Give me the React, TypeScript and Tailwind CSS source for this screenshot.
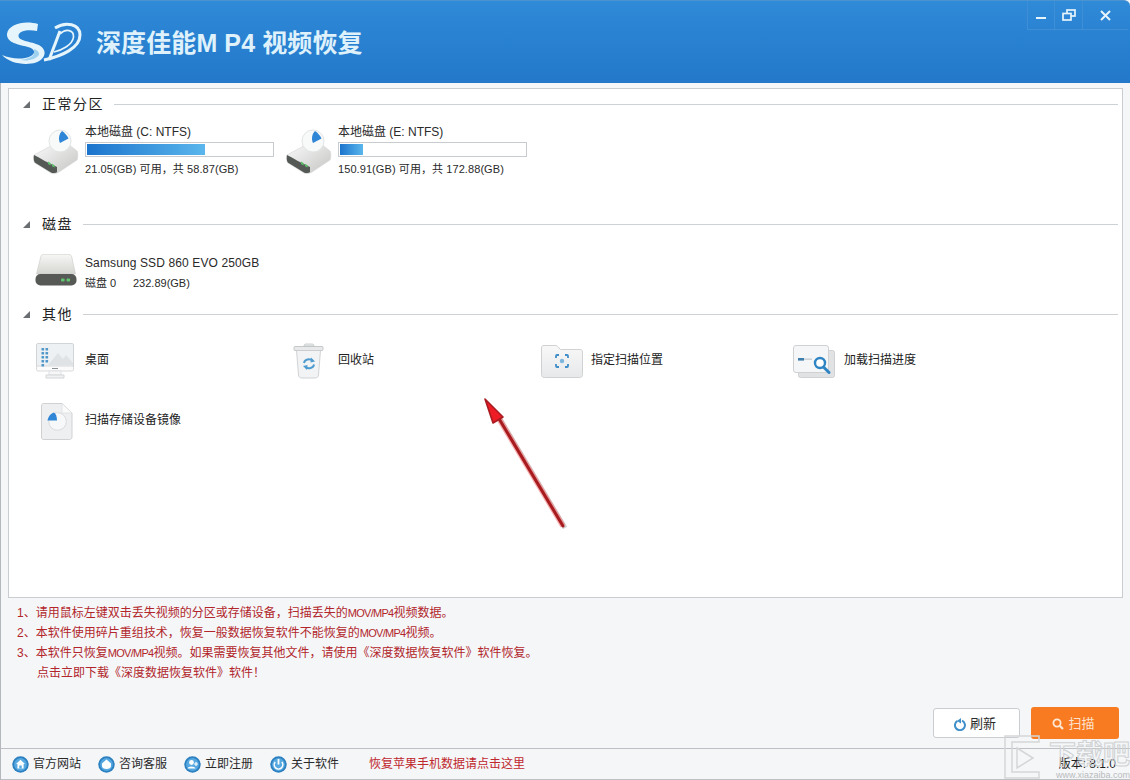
import React from "react";

const FONT = { fontFamily: '"Liberation Sans","Noto Sans CJK SC",sans-serif' };

function Logo() {
  return (
    <svg width="82" height="48" viewBox="0 0 82 48" fill="none">
      <path d="M38 5 C25 1 8 5 7 15 C6.5 24 19 25.5 28 28 C35 30 36 34 31 37 C23 41 11 40 2 36 C9 44 25 47 36 43.5 C47 39.5 47.5 29.5 37.5 25.5 C29 22 18 22 18.5 16.5 C19 11.5 29 10 37 12Z" fill="#e6f5fc" />
      <path d="M34 33 C35 37 28 40.5 20 41 C27 42.5 37 40.5 39 35.5 C39.5 33 37 31 34 30Z" fill="#9fd2ef" />
      <path d="M49 41 L60 12" stroke="#e6f5fc" strokeWidth="3" />
      <path d="M55 9 C66 2 80 5 80 16 C80 29 62 37 44 41" stroke="#e6f5fc" strokeWidth="3" />
      <path d="M60 15 C66 9 74 11 73.5 18 C72.5 26 62 31 54 33" stroke="#e6f5fc" strokeWidth="1.7" />
    </svg>
  );
}

function Triangle() {
  return (
    <svg width="7" height="7" viewBox="0 0 7 7"><path d="M7 0 V7 H0 Z" fill="#6a6e72" /></svg>
  );
}

function SectionHeader({ title }: { title: string }) {
  return (
    <div className="flex h-[30px] items-center pl-[14px] pr-[4px]">
      <Triangle />
      <span className="ml-[12px] text-[14px] tracking-[1.5px] text-[#222]">{title}</span>
      <div className="ml-[10px] h-px flex-1 bg-[#cfd2d5]" />
    </div>
  );
}

function PartitionIcon() {
  return (
    <svg width="48" height="48" viewBox="0 0 48 48">
      <defs>
        <linearGradient id="pb" x1="0" y1="0" x2="1" y2="1"><stop offset="0" stopColor="#fcfcfc" /><stop offset="1" stopColor="#c4c6c3" /></linearGradient>
      </defs>
      <path d="M2 28 L26 15 C29 14 32 14 35 16 L45 24 C46 25 46 31 45 33 L27 45 C24 47 21 47 19 46 L3 36 C1.5 35 1.5 30 2 28Z" fill="url(#pb)" stroke="#d3d5d3" strokeWidth=".6" />
      <path d="M2 28 C8 31 16 36 25 40 V45 C24 46 21 46.5 19 45.5 L3.5 36 C1.5 35 1.5 30 2 28Z" fill="#555956" />
      <path d="M16 34.5 L18.6 36 V38.4 L16 37Z M20 36.8 L22.6 38.2 V40.6 L20 39.2Z" fill="#5cc06a" />
      <circle cx="28" cy="14" r="11" fill="#f8f9f9" stroke="#e2e4e5" />
      <path d="M30 4 C33 6 35 8.5 36.5 11.5 L28 16 C26 12 27 7 30 4Z" fill="#2f86d6" />
    </svg>
  );
}

function DiskIcon() {
  return (
    <svg width="42" height="32" viewBox="0 0 42 32">
      <defs>
        <linearGradient id="db" x1="0" y1="0" x2="0" y2="1"><stop offset="0" stopColor="#f7f7f5" /><stop offset="1" stopColor="#d5d6d2" /></linearGradient>
      </defs>
      <path d="M6 2 C6.5 .8 8 .3 9 .3 H33 C34.5 .3 36 1 36.5 2 L40.5 20 H1.5Z" fill="url(#db)" stroke="#c9cac6" strokeWidth=".6" />
      <rect x=".5" y="20" width="41" height="11.5" rx="5" fill="#565956" />
      <rect x="26" y="24.5" width="3.6" height="3" rx="1" fill="#62c46e" />
      <rect x="31.5" y="24.5" width="3.6" height="3" rx="1" fill="#62c46e" />
    </svg>
  );
}

function DesktopIcon() {
  return (
    <svg width="40" height="36" viewBox="0 0 40 36">
      <rect x=".5" y=".5" width="37" height="26.5" rx="1.5" fill="#eef1f3" stroke="#d2d5d7" />
      <rect x=".5" y="23" width="37" height="5" rx="1.5" fill="#fbfbfb" stroke="#d8dadc" />
      <path d="M12 22 L22 10 L27 16 L30 12 L37 20 V22Z" fill="#e0e3e6" />
      {[0, 1, 2, 3, 4].map((r) =>
        (r === 4 ? [0] : [0, 1]).map((c) => (
          <rect key={`${r}${c}`} x={5.5 + c * 4} y={5 + r * 4} width="2.6" height="2.6" rx=".6" fill="#4f97c9" />
        ))
      )}
      <rect x="16" y="25" width="6" height="1" fill="#8d9296" />
      <rect x="13" y="28" width="12" height="4" fill="#f7f7f8" stroke="#e0e2e3" />
      <path d="M10 32 H28 V35 H10Z" fill="#f1f2f3" stroke="#d2d5d7" />
    </svg>
  );
}

function BinIcon() {
  return (
    <svg width="32" height="36" viewBox="0 0 32 36">
      <path d="M11 3 C11 1.5 12 1 13 1 H19 C20 1 21 1.5 21 3Z" fill="#eceeef" stroke="#c2c5c7" strokeWidth=".8" />
      <rect x="1" y="3.5" width="29" height="4" rx="1" fill="#e7e9ea" stroke="#b9bcbe" strokeWidth=".8" />
      <path d="M3.5 7.5 H27.5 L25.5 32 C25.4 34 24 35 22 35 H9 C7 35 5.6 34 5.5 32Z" fill="#f1f3f4" stroke="#c6c9cb" strokeWidth=".8" />
      <path d="M11 20 C11.5 16.5 16.5 15 19.5 17.5 M21 21.5 C20.5 25 15.5 26.5 12.5 24" fill="none" stroke="#4e9bd0" strokeWidth="1.9" />
      <path d="M18 14.5 L22 18.5 L17.5 19.5Z M14 27 L10 23 L14.5 22Z" fill="#4e9bd0" />
    </svg>
  );
}

function FolderIcon() {
  return (
    <svg width="42" height="33" viewBox="0 0 42 33">
      <defs>
        <linearGradient id="fb" x1="0" y1="0" x2="0" y2="1"><stop offset="0" stopColor="#f8f8f8" /><stop offset="1" stopColor="#e7e8ea" /></linearGradient>
      </defs>
      <path d="M.5 3 C.5 1.5 1.5 .5 3 .5 H14 C16 .5 17 1.5 18 3 L19.5 4.5 H39 C40.5 4.5 41.5 5.5 41.5 7 V29.5 C41.5 31.5 40.5 32.5 38.5 32.5 H3.5 C1.5 32.5 .5 31.5 .5 29.5Z" fill="url(#fb)" stroke="#cfd1d3" />
      <path d="M15 13 V11 C15 10.5 15.5 10 16 10 H18 M24 10 H26 C26.5 10 27 10.5 27 11 V13 M27 19 V21 C27 21.5 26.5 22 26 22 H24 M18 22 H16 C15.5 22 15 21.5 15 21 V19" fill="none" stroke="#3f8dc8" strokeWidth="1.8" />
      <circle cx="21" cy="16" r="2.2" fill="#7fb6dd" />
    </svg>
  );
}

function LoadIcon() {
  return (
    <svg width="42" height="33" viewBox="0 0 42 33">
      <rect x="5.5" y="5.5" width="36" height="27" rx="2" fill="#e0e2e4" stroke="#cfd1d3" />
      <rect x=".5" y=".5" width="35" height="27" rx="2.5" fill="#f5f6f7" stroke="#cfd1d3" />
      <rect x="5" y="13" width="6" height="2.6" fill="#3f7fae" />
      <rect x="11" y="13.4" width="8" height="1.6" fill="#cdd3d8" />
      <circle cx="27" cy="18" r="5" fill="#fff" stroke="#2f85c4" strokeWidth="2.4" />
      <path d="M30.5 22 L36 27.5" stroke="#2f85c4" strokeWidth="3" strokeLinecap="round" />
    </svg>
  );
}

function ImageFileIcon() {
  return (
    <svg width="32" height="37" viewBox="0 0 32 37">
      <path d="M2.5 .5 H21 L31 10 V34 C31 35.5 30 36.5 28.5 36.5 H2.5 C1.2 36.5 .5 35.5 .5 34 V3 C.5 1.5 1.2 .5 2.5 .5Z" fill="#eeeff0" stroke="#cfd1d3" />
      <path d="M21 .5 V10 H31Z" fill="#fbfbfb" stroke="#dadcde" strokeWidth=".7" />
      <circle cx="16.5" cy="18.5" r="8.8" fill="#f7f8f9" stroke="#d9dbdd" strokeWidth="1" />
      <path d="M16 17.5 H6.5 C7 14 9.5 10.5 13 9.5 C15 10.5 16 14 16 17.5Z" fill="#2f86d6" />
    </svg>
  );
}

function Partition({ label, free, fill }: { label: string; free: string; fill: number }) {
  return (
    <div className="flex w-[253px]">
      <div className="flex w-[57px] shrink-0 pl-[4px] pt-[8px]">
        <PartitionIcon />
      </div>
      <div className="flex w-[189px] flex-col pt-[6px] text-[11px] leading-[14px] text-[#2a2a2a]">
        <div className="text-[12px]">{label}</div>
        <div className="mt-[3px] h-[15px] border border-[#c8ccd0] bg-white p-px">
          <div className="h-full bg-gradient-to-r from-[#1b74cc] to-[#5ab6ec]" style={{ width: `${fill}px` }} />
        </div>
        <div className="mt-[5px] tracking-[0.08px]">{free}</div>
      </div>
    </div>
  );
}

function Tile({ icon, label, indent }: { icon: React.ReactNode; label: string; indent: string }) {
  return (
    <div className="flex h-[60px] w-[253px] items-center">
      <div className={`flex w-[57px] shrink-0 items-center pt-[4px] ${indent}`}>{icon}</div>
      <span className="pt-[2px] text-[12px] text-[#222]">{label}</span>
    </div>
  );
}

function RoundIcon({ children }: { children: React.ReactNode }) {
  return (
    <svg width="17" height="17" viewBox="0 0 17 17">
      <circle cx="8.5" cy="8.5" r="8.2" fill="#2d80c0" />
      <circle cx="8.5" cy="8.5" r="6.4" fill="#55a8e0" />
      {children}
    </svg>
  );
}

function StatusLink({ icon, label, width }: { icon: React.ReactNode; label: string; width: string }) {
  return (
    <div className={`flex items-center gap-[4px] ${width}`}>
      {icon}
      <span className="text-[12px] text-[#2a2a2a]">{label}</span>
    </div>
  );
}

function Mov() {
  return <span className="text-[11px] tracking-[-0.7px]">MOV/MP4</span>;
}

export default function App() {
  return (
    <div className="relative flex h-[780px] w-[1130px] flex-col overflow-hidden bg-[#f4f6f8]" style={FONT}>
      {/* title bar */}
      <header className="flex h-[83px] shrink-0 items-start justify-between rounded-tr-[6px] border-t border-[#4b93d0] bg-gradient-to-b from-[#2f8ad8] to-[#2378c9]">
        <div className="flex items-center pt-[18px]">
          <Logo />
          <h1 className="ml-[14px] whitespace-nowrap text-[25px] font-bold leading-[46px] tracking-[0.1px] text-[#dff1fb]">
            深度佳能M P4 视频恢复
          </h1>
        </div>
        <div className="mr-[2px] flex h-[29px] border-b border-l border-[#3f8fd6]">
          <div className="flex w-[27px] items-center justify-center border-r border-[#3f8fd6] pt-[5px]">
            <div className="h-[2px] w-[10px] bg-[#e6f4fb]" />
          </div>
          <div className="flex w-[28px] items-center justify-center border-r border-[#3f8fd6]">
            <svg width="14" height="12" viewBox="0 0 14 12" fill="none" stroke="#e6f4fb" strokeWidth="1.7">
              <rect x="5" y="1" width="8" height="6" />
              <rect x="1" y="4.5" width="8" height="6.5" fill="#2f86d6" />
            </svg>
          </div>
          <div className="flex w-[45px] items-center justify-center">
            <svg width="11" height="11" viewBox="0 0 11 11" stroke="#e6f4fb" strokeWidth="2"><path d="M1 1 L10 10 M10 1 L1 10" /></svg>
          </div>
        </div>
      </header>

      <div className="relative flex flex-1 flex-col border-l border-[#b4b8bc]">
        {/* main panel */}
        <main className="mx-[7px] mt-[5px] h-[510px] border border-[#c9ccd0] bg-white">
          <SectionHeader title="正常分区" />
          <div className="flex h-[90px] pl-[19px]">
            <Partition label="本地磁盘 (C: NTFS)" free="21.05(GB) 可用，共 58.87(GB)" fill={118} />
            <Partition label="本地磁盘 (E: NTFS)" free="150.91(GB) 可用，共 172.88(GB)" fill={23} />
          </div>
          <SectionHeader title="磁盘" />
          <div className="flex h-[60px] pl-[19px]">
            <div className="flex w-[57px] shrink-0 pl-[7px] pt-[15px]">
              <DiskIcon />
            </div>
            <div className="flex flex-col pt-[15px] text-[#2a2a2a]">
              <div className="text-[12px] leading-[18px] tracking-[0.12px]">Samsung SSD 860 EVO 250GB</div>
              <div className="mt-[2px] flex text-[11px] leading-[18px]">
                <span className="w-[48px]">磁盘 0</span>
                <span>232.89(GB)</span>
              </div>
            </div>
          </div>
          <SectionHeader title="其他" />
          <div className="grid grid-cols-[repeat(4,253px)] pl-[19px]">
            <Tile icon={<DesktopIcon />} label="桌面" indent="pl-[8px]" />
            <Tile icon={<BinIcon />} label="回收站" indent="pl-[12px]" />
            <Tile icon={<FolderIcon />} label="指定扫描位置" indent="pl-[7px]" />
            <Tile icon={<LoadIcon />} label="加载扫描进度" indent="pl-[6px]" />
            <Tile icon={<ImageFileIcon />} label="扫描存储设备镜像" indent="pl-[13px]" />
          </div>
        </main>

        {/* notes */}
        <div className="ml-[16px] mt-[5px] flex flex-col text-[12px] leading-[20px] text-[#b2262b]">
          <div>1、请用鼠标左键双击丢失视频的分区或存储设备，扫描丢失的<Mov />视频数据。</div>
          <div>2、本软件使用碎片重组技术，恢复一般数据恢复软件不能恢复的<Mov />视频。</div>
          <div>3、本软件只恢复<Mov />视频。如果需要恢复其他文件，请使用《深度数据恢复软件》软件恢复。</div>
          <div className="pl-[20px] leading-[21px]">点击立即下载《深度数据恢复软件》软件！</div>
        </div>

        {/* buttons */}
        <div className="mt-auto flex justify-end gap-[11px] pb-[9px] pr-[11px]">
          <div className="mt-[1px] flex h-[30px] w-[87px] items-center justify-center gap-[4px] rounded-[3px] border border-[#c9ccd0] bg-white pr-[3px] pt-[2px] text-[13px] text-[#2a2a2a]">
            <svg width="12" height="13" viewBox="0 0 12 13" fill="none">
              <path d="M3.5 2.8 A5 5 0 1 0 8 2.6" stroke="#3f8fc9" strokeWidth="2" />
              <path d="M7 0 L3 3 L7 5.5Z" fill="#3f8fc9" />
            </svg>
            刷新
          </div>
          <div className="flex h-[32px] w-[88px] items-center justify-center gap-[4px] rounded-[3px] bg-[#f87a21] pr-[3px] pt-[2px] text-[13px] text-[#fde3cf]">
            <svg width="12" height="12" viewBox="0 0 12 12" fill="none" stroke="#fde9d6">
              <circle cx="5" cy="5" r="3.6" strokeWidth="1.8" />
              <path d="M8 8 L11 11" strokeWidth="2.2" />
            </svg>
            扫描
          </div>
        </div>

        {/* status bar */}
        <footer className="flex h-[32px] shrink-0 items-center border-y border-[#bcc0c4] pl-[11px] pr-[14px]">
          <StatusLink width="w-[86px]" label="官方网站" icon={
            <RoundIcon><path d="M8.5 3.8 L13 8 H11.6 V12.5 H5.4 V8 H4Z" fill="#fff" /><rect x="7.3" y="9.5" width="2.4" height="3" fill="#55a8e0" /></RoundIcon>
          } />
          <StatusLink width="w-[86px]" label="咨询客服" icon={
            <RoundIcon><path d="M8.5 3.5 L13 7.5 V10 C13 12 11 13 8.5 13 C6 13 4 12 4 10 V7.5Z" fill="#fff" /></RoundIcon>
          } />
          <StatusLink width="w-[86px]" label="立即注册" icon={
            <RoundIcon><circle cx="7.5" cy="6.5" r="2.4" fill="#fff" /><path d="M3.5 12.5 C4 9.8 11 9.8 11.5 12.5Z" fill="#fff" /><path d="M12 6 V10 M10 8 H14" stroke="#fff" strokeWidth="1.2" /></RoundIcon>
          } />
          <StatusLink width="w-[99px]" label="关于软件" icon={
            <RoundIcon><rect x="7.6" y="3" width="1.8" height="5.5" fill="#fff" /><path d="M5.2 6 A4.3 4.3 0 1 0 11.8 6" fill="none" stroke="#fff" strokeWidth="1.5" /></RoundIcon>
          } />
          <span className="text-[12px] text-[#c0272d]">恢复苹果手机数据请点击这里</span>
          <span className="ml-auto text-[12px] text-[#1e1e1e]">版本: 8.1.0</span>
        </footer>
      </div>

      {/* annotation arrow over the screenshot */}
      <svg className="pointer-events-none absolute left-[470px] top-[385px]" width="110" height="150" viewBox="0 0 110 150" fill="none">
        <path d="M93 141 L28 32" stroke="#000" strokeOpacity=".18" strokeWidth="5" transform="translate(2 2)" />
        <path d="M93 141 L28 32" stroke="#f47a7a" strokeOpacity=".6" strokeWidth="5.5" />
        <path d="M93 141 L28 32" stroke="#a81c20" strokeWidth="3" strokeLinecap="round" />
        <path d="M15 14 L33 32 L23 38Z" fill="#ee1c25" stroke="#a81c22" strokeWidth="1.6" strokeLinejoin="round" />
      </svg>

      {/* site watermark over the corner */}
      <div className="pointer-events-none absolute bottom-0 right-0 flex items-end gap-[6px]">
        <svg width="40" height="46" viewBox="0 0 40 46" fill="none" stroke="#d4d6d8" strokeWidth="1.5">
          <path d="M2 2 H36 V8 H9 V38 H36 V44 H2Z" />
          <path d="M14 14 L30 24 L14 34Z" />
        </svg>
        <div className="flex flex-col items-end">
          <span className="text-[27px] font-bold leading-[30px] text-transparent [-webkit-text-stroke:1px_#cfd1d3]">下载吧</span>
          <span className="text-[9px] leading-[10px] text-[#b9bbbd]">www.xiazaiba.com</span>
        </div>
      </div>
    </div>
  );
}
